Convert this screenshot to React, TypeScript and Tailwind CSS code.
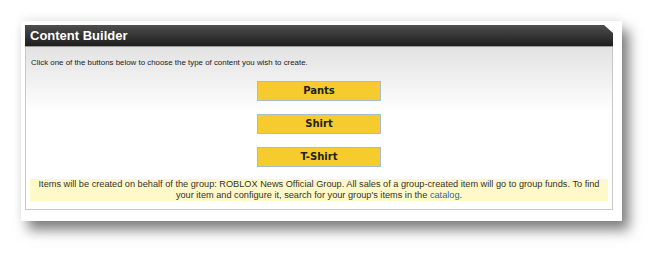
export default function App() {
  const types = ["Pants", "Shirt", "T-Shirt"];

  return (
    <div className="w-[666px] h-[254px] bg-white pl-[21px] pt-[21px] font-['Liberation_Sans',Arial,sans-serif]">
      {/* outer white card with drop shadow */}
      <div className="w-[601px] h-[200px] bg-white pl-[4px] pt-[4px] shadow-[7px_9px_12px_rgba(0,0,0,0.5),0_-3px_8px_rgba(0,0,0,0.06)]">
        <div className="flex flex-col w-[588px] h-[185px]">
          {/* header bar */}
          <div className="h-[22px] flex items-center px-[5px] bg-gradient-to-b from-[#4e4e4e] to-[#1e1e1e] border-b border-[#9a9a9a] [clip-path:polygon(0_0,calc(100%-9px)_0,100%_8px,100%_100%,0_100%)]">
            <h1 className="text-[13px] font-bold text-white leading-none">Content Builder</h1>
          </div>

          {/* body */}
          <div className="flex-1 flex flex-col border-x border-b border-[#c9c9c9] bg-gradient-to-b from-[#e2e2e2] via-white via-40% to-white px-[4px]">
            <p className="text-[7.9px] text-[#222] mt-[12px] ml-[1px] leading-none">
              Click one of the buttons below to choose the type of content you wish to create.
            </p>

            <div className="flex flex-col items-center gap-[13px] mt-[14px]">
              {types.map((t) => (
                <button
                  key={t}
                  className="w-[124px] h-[20px] bg-[#f5cb2d] border border-[#a9bccb] text-[10px] font-bold text-[#222] font-['DejaVu_Sans',Verdana,sans-serif] leading-none"
                >
                  {t}
                </button>
              ))}
            </div>

            <div className="mt-[12px] bg-[#fff8c8] text-center text-[9.2px] leading-[11px] text-[#333] px-[4px]">
              Items will be created on behalf of the group: ROBLOX News Official Group. All sales of a group-created item will go to group funds. To find your item and configure it, search for your group's items in the{" "}
              <a href="#" className="text-[#2f66b5]">catalog</a>.
            </div>
          </div>
        </div>
      </div>
    </div>
  );
}
